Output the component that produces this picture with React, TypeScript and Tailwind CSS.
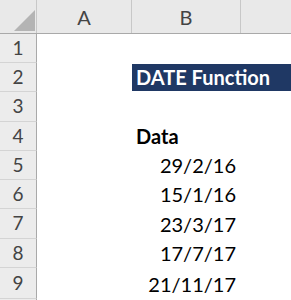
import React from 'react';

const font = { fontFamily: 'Lato, "Open Sans", sans-serif' };

const rows = [
  { n: 1, h: 'h-[29px]' },
  { n: 2, h: 'h-[29px]' },
  { n: 3, h: 'h-[30px]' },
  { n: 4, h: 'h-[29px]' },
  { n: 5, h: 'h-[29px]' },
  { n: 6, h: 'h-[29px]' },
  { n: 7, h: 'h-[30px]' },
  { n: 8, h: 'h-[29px]' },
  { n: 9, h: 'h-[31px]' },
];

const dates: Record<number, string> = {
  5: '29/2/16',
  6: '15/1/16',
  7: '23/3/17',
  8: '17/7/17',
  9: '21/11/17',
};

function Cells({ n }: { n: number }) {
  if (n === 2) {
    return (
      <>
        <div className="w-[95px]" />
        <div className="flex-1 flex items-end bg-[#1f3864] pl-[4px] pb-[4px] my-[1px]">
          <span className="text-[20px] leading-none font-bold text-white">DATE Function</span>
        </div>
      </>
    );
  }
  if (n === 4) {
    return (
      <>
        <div className="w-[95px]" />
        <div className="w-[109px] flex items-end pl-[4px] pb-[5px]">
          <span className="text-[20px] leading-none font-bold text-black">Data</span>
        </div>
      </>
    );
  }
  if (dates[n]) {
    return (
      <>
        <div className="w-[95px]" />
        <div className="w-[109px] flex items-end justify-end pr-[5px] pb-[5px]">
          <span className="text-[20px] leading-none text-black">{dates[n]}</span>
        </div>
      </>
    );
  }
  return null;
}

export default function App() {
  return (
    <div className="w-[291px] h-[300px] overflow-hidden bg-white" style={font}>
      <div className="flex h-[34px] bg-[#e9e9e9] border-b border-[#a9a9a9]">
        <div className="w-[37px] border-r border-[#c8c8c8] relative">
          <svg className="absolute left-[14px] top-[10px]" width="21" height="21" viewBox="0 0 21 21">
            <polygon points="21,0 21,21 0,21" fill="#b4b4b4" />
          </svg>
        </div>
        <div className="w-[95px] border-r border-[#c8c8c8] flex items-center justify-center text-[20px] text-[#444]">A</div>
        <div className="w-[109px] border-r border-[#c8c8c8] flex items-center justify-center text-[20px] text-[#444]">B</div>
        <div className="flex-1" />
      </div>
      {rows.map((r) => (
        <div key={r.n} className={`flex ${r.h}`}>
          <div className="w-[37px] shrink-0 bg-[#ececec] border-r border-[#a9a9a9] border-b border-b-[#d4d4d4] flex items-center justify-center text-[19px] text-[#444]">
            {r.n}
          </div>
          <Cells n={r.n} />
        </div>
      ))}
      <div className="w-[37px] h-[10px] bg-[#ececec] border-r border-[#a9a9a9]" />
    </div>
  );
}
